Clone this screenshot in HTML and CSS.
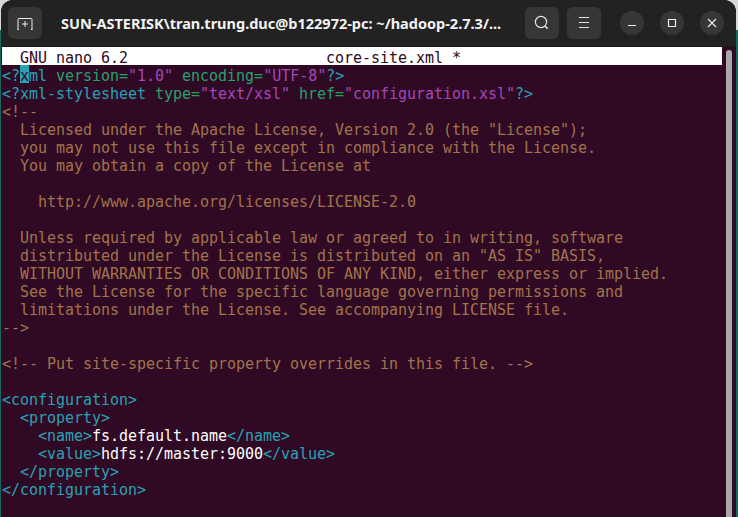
FILE: index.html
```html
<!DOCTYPE html>
<html lang="en">
<head>
<meta charset="utf-8">
<title>core-site.xml</title>
<link rel="stylesheet" href="styles.css">
</head>
<body>
<div class="window">
  <header class="titlebar">
    <button class="tool new-tab" aria-label="New tab">
      <svg width="16" height="16" viewBox="0 0 16 16" fill="none" stroke="#eee" stroke-width="1"><path d="M0.5 14.5h1.5M1 14.5V4.5a1 1 0 0 1 1-1h12a1 1 0 0 1 1 1v10M14 14.5h1.5M8 6v6M5 9h6"/></svg>
    </button>
    <div class="title">SUN-ASTERISK\tran.trung.duc@b122972-pc: ~/hadoop-2.7.3/...</div>
    <button class="tool" aria-label="Search">
      <svg width="16" height="16" viewBox="0 0 16 16" fill="none" stroke="#e6e6e6" stroke-width="1.2"><circle cx="7" cy="7" r="5.6"/><path d="M11.2 11.2L13.6 13.6" stroke-width="1.6"/></svg>
    </button>
    <button class="tool" aria-label="Menu">
      <svg width="16" height="16" viewBox="0 0 16 16" fill="none" stroke="#e6e6e6" stroke-width="1"><path d="M3 2.5h10M3 7.5h10M3 12.5h10"/></svg>
    </button>
    <div class="controls">
      <button class="ctl" aria-label="Minimize"><svg width="10" height="10" viewBox="0 0 10 10" stroke="#eee" stroke-width="1"><path d="M1 7.5h8"/></svg></button>
      <button class="ctl" aria-label="Maximize"><svg width="10" height="10" viewBox="0 0 10 10" fill="none" stroke="#eee" stroke-width="1.2"><path d="M1.5 1.5h7v7h-7z"/></svg></button>
      <button class="ctl" aria-label="Close"><svg width="10" height="10" viewBox="0 0 10 10" fill="none" stroke="#eee" stroke-width="1.1"><path d="M1 1l8 8M9 1l-8 8"/></svg></button>
    </div>
  </header>
  <main class="terminal">
    <div class="screen">
      <div class="nano-bar"><span class="nano-ver">  GNU nano 6.2</span><span class="nano-file">core-site.xml *</span></div>
      <pre class="code"><span class="t">&lt;?</span><span class="cursor">x</span><span class="t">ml</span> <span class="a">version=</span><span class="s">"1.0"</span> <span class="a">encoding=</span><span class="s">"UTF-8"</span><span class="t">?&gt;</span>
<span class="t">&lt;?xml-stylesheet</span> <span class="a">type=</span><span class="s">"text/xsl"</span> <span class="a">href=</span><span class="s">"configuration.xsl"</span><span class="t">?&gt;</span>
<span class="c">&lt;!--
  Licensed under the Apache License, Version 2.0 (the "License");
  you may not use this file except in compliance with the License.
  You may obtain a copy of the License at

    http://www.apache.org/licenses/LICENSE-2.0

  Unless required by applicable law or agreed to in writing, software
  distributed under the License is distributed on an "AS IS" BASIS,
  WITHOUT WARRANTIES OR CONDITIONS OF ANY KIND, either express or implied.
  See the License for the specific language governing permissions and
  limitations under the License. See accompanying LICENSE file.
--&gt;

&lt;!-- Put site-specific property overrides in this file. --&gt;</span>

<span class="t">&lt;configuration&gt;</span>
<span class="t">  &lt;property&gt;</span>
<span class="t">    &lt;name&gt;</span><span class="v">fs.default.name</span><span class="t">&lt;/name&gt;</span>
<span class="t">    &lt;value&gt;</span><span class="v">hdfs://master:9000</span><span class="t">&lt;/value&gt;</span>
<span class="t">  &lt;/property&gt;</span>
<span class="t">&lt;/configuration&gt;</span></pre>
    </div>
    <div class="scrollbar"><div class="thumb"></div></div>
  </main>
</div>
</body>
</html>
```
FILE: styles.css
```css
* { box-sizing: border-box; }
html, body { margin: 0; height: 100%; }
body {
  background: linear-gradient(#d8d8d8 0, #d8d8d8 30px, #136a5c 30px);
  overflow: hidden;
  padding-left: 1px;
  padding-right: 2px;
}
.window {
  height: 517px;
  display: flex;
  flex-direction: column;
  border-radius: 12px 12px 0 0;
  overflow: hidden;
  background: #300a24;
}
.titlebar {
  height: 47px;
  flex: none;
  display: flex;
  align-items: center;
  gap: 8px;
  background: #222222;
  border-bottom: 1px solid #1a1a1a;
  padding: 0 7px;
}
.tool {
  width: 34px;
  height: 32px;
  flex: none;
  display: flex;
  align-items: center;
  justify-content: center;
  padding: 0;
  border: 0;
  border-radius: 6px;
  background: #363636;
}
.title {
  flex: 1;
  min-width: 0;
  padding-left: 11px;
  color: #f3f3f3;
  font: 700 14.5px "Noto Sans", sans-serif;
  white-space: nowrap;
  overflow: hidden;
}
.controls {
  display: flex;
  gap: 16px;
  margin-left: 11px;
  margin-right: 5px;
}
.ctl {
  width: 24px;
  height: 24px;
  display: flex;
  align-items: center;
  justify-content: center;
  padding: 0;
  border: 0;
  border-radius: 50%;
  background: #363636;
}
.terminal {
  flex: 1;
  min-height: 0;
  display: flex;
  padding-left: 1px;
}
.screen {
  width: 720px;
  flex: none;
  font: 15px/18px "DejaVu Sans Mono", monospace;
  letter-spacing: -0.03px;
}
.nano-bar {
  position: relative;
  height: 18px;
  padding-top: 2px;
  background: #ffffff;
  color: #300a24;
  white-space: pre;
}
.nano-file {
  position: absolute;
  left: 324px;
  top: 2px;
}
.code {
  margin: 0;
  padding-top: 2px;
  font: inherit;
  letter-spacing: inherit;
  color: #d0cfcc;
}
.t { color: #2aa1b3; }
.a { color: #26a269; }
.s { color: #a347ba; }
.c { color: #a2734c; }
.v { color: #ffffff; }
.cursor {
  display: inline-block;
  height: 18px;
  margin-top: -2px;
  line-height: 22px;
  background: #2aa1b3;
  color: #300a24;
}
.scrollbar {
  flex: none;
  margin-left: 4px;
  width: 6px;
  display: flex;
}
.thumb {
  flex: 1;
  margin-top: 3px;
  background: #a8a8a8;
  border-radius: 3px 3px 0 0;
}
```
